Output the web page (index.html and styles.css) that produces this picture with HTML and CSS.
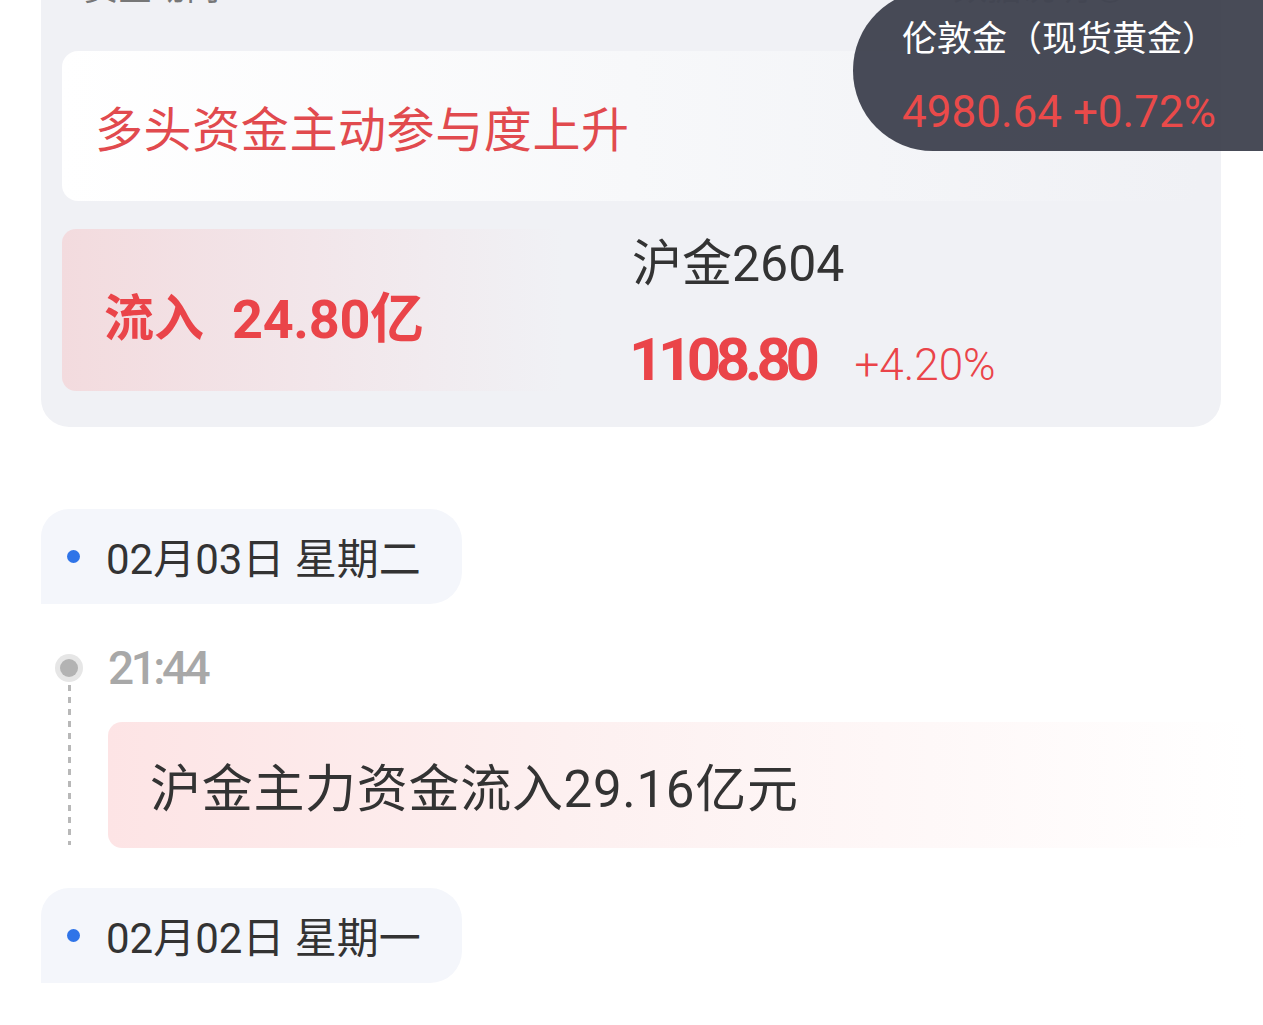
FILE: index.html
```html
<!DOCTYPE html>
<html lang="zh-CN">
<head>
<meta charset="utf-8">
<title>资金动向</title>
<link rel="stylesheet" href="styles.css">
</head>
<body>
<div class="page">
  <section class="summary">
    <div class="summary-head">
      <span class="head-title">资金动向</span>
      <span class="head-help">数据说明 <span class="help-icon">?</span></span>
    </div>
    <div class="signal">多头资金主动参与度上升</div>
    <div class="flow-row">
      <div class="flow-box"><span class="flow-label">流入</span><span class="flow-value">24.80亿</span></div>
      <div class="contract">
        <div class="contract-name">沪金2604</div>
        <div class="contract-price"><span class="price">1108.80</span><span class="change">+4.20%</span></div>
      </div>
    </div>
  </section>

  <div class="date-pill"><span class="blue-dot"></span><span class="date-text">02月03日 星期二</span></div>

  <div class="tl-item">
    <div class="tl-rail">
      <span class="tl-dot"><span class="tl-dot-inner"></span></span>
      <span class="tl-line"></span>
    </div>
    <div class="tl-body">
      <div class="tl-time">21:44</div>
      <div class="tl-card">沪金主力资金流入29.16亿元</div>
    </div>
  </div>

  <div class="date-pill"><span class="blue-dot"></span><span class="date-text">02月02日 星期一</span></div>
</div>

<div class="quote-badge">
  <div class="quote-name">伦敦金（现货黄金）</div>
  <div class="quote-value">4980.64 +0.72%</div>
</div>
</body>
</html>
```

FILE: styles.css
```css
* { box-sizing: border-box; }
html, body { margin: 0; padding: 0; background: #ffffff; }
body {
  font-family: Roboto, "Noto Sans CJK SC", "Noto Sans", sans-serif;
  color: #333333;
  overflow: hidden;
  width: 1263px;
  height: 1025px;
  position: relative;
}
.page {
  padding-left: 41px;
  display: flex;
  flex-direction: column;
  align-items: flex-start;
}
.summary {
  width: 1180px;
  margin-top: -60px;
  background: #f0f1f5;
  border-radius: 0 0 28px 28px;
  padding: 0 21px 36px 21px;
  display: flex;
  flex-direction: column;
}
.summary-head {
  height: 111px;
  display: flex;
  justify-content: space-between;
  align-items: flex-end;
  padding: 0 75px 43px 22px;
  font-size: 34px;
  line-height: 40px;
}
.head-title { color: #777; }
.head-help { color: #c8c8cc; display: flex; align-items: center; gap: 6px; }
.help-icon {
  display: inline-flex; width: 30px; height: 30px; border-radius: 50%;
  border: 2px solid #c8c8cc; font-size: 20px; line-height: 1;
  align-items: center; justify-content: center;
}
.signal {
  height: 150px;
  border-radius: 16px;
  background: linear-gradient(90deg, #ffffff 0%, #f7f8fa 50%, #f0f1f5 100%);
  display: flex;
  align-items: center;
  padding-left: 33px;
  font-size: 48px;
  color: #e14a4e;
  letter-spacing: 0.6px;
}
.flow-row {
  margin-top: 28px;
  display: flex;
  height: 162px;
}
.flow-box {
  width: 500px;
  border-radius: 14px 0 0 14px;
  background: linear-gradient(90deg, #f3dbde 0%, #f2e6ea 50%, rgba(240,241,245,0) 100%);
  display: flex;
  align-items: center;
  padding-left: 42px;
  padding-top: 8px;
  color: #ea4449;
  font-weight: 700;
}
.flow-label { font-size: 50px; margin-right: 28px; }
.flow-value { font-size: 54px; letter-spacing: -0.3px; }
.contract {
  margin-left: 70px;
  display: flex;
  flex-direction: column;
  padding-top: 5px;
}
.contract-name { font-size: 50px; line-height: 60px; color: #333; }
.contract-price {
  margin-top: 31px;
  display: flex;
  align-items: baseline;
  color: #ea4449;
}
.price { font-size: 60px; font-weight: 700; letter-spacing: -5.5px; line-height: 70px; margin-left: -3px; }
.change { font-size: 44px; font-weight: 300; margin-left: 40px; }

.date-pill {
  width: 421px;
  height: 95px;
  background: #f4f6fb;
  border-radius: 28px 32px 32px 0;
  display: flex;
  align-items: center;
  padding-left: 26px;
  padding-bottom: 3px;
}
.summary + .date-pill { margin-top: 82px; }
.blue-dot { width: 13px; height: 13px; border-radius: 50%; background: #2f74e8; flex: none; margin-top: 3px; }
.date-text { margin-left: 26px; font-size: 42px; color: #333; }

.tl-item {
  margin-left: 14px;
  margin-top: 40px;
  display: flex;
  gap: 25px;
  width: 1195px;
}
.tl-rail {
  width: 28px;
  display: flex;
  flex-direction: column;
  align-items: center;
  padding-top: 10px;
}
.tl-dot {
  width: 28px; height: 28px; border-radius: 50%;
  background: #e6e6e6;
  display: flex; align-items: center; justify-content: center;
  flex: none;
}
.tl-dot-inner { width: 18px; height: 18px; border-radius: 50%; background: #b3b3b3; }
.tl-line {
  width: 3px;
  height: 160px;
  margin-top: 3px;
  background: repeating-linear-gradient(180deg, #b8b8b8 0 6px, transparent 6px 12px);
}
.tl-body { flex: 1; display: flex; flex-direction: column; }
.tl-time {
  font-size: 46px;
  line-height: 48px;
  color: #a8a8a8;
  font-weight: 500;
  letter-spacing: -3.5px;
}
.tl-card {
  margin-top: 30px;
  height: 126px;
  border-radius: 14px;
  background: linear-gradient(90deg, #fde4e5 0%, #fdf0f0 40%, #ffffff 100%);
  display: flex;
  align-items: center;
  padding-left: 42px;
  font-size: 51px;
  color: #333;
  letter-spacing: 0.7px;
}
.tl-item + .date-pill { margin-top: 40px; }

.quote-badge {
  position: absolute;
  top: -10px;
  right: 0;
  width: 410px;
  height: 161px;
  border-radius: 80px 0 0 80px;
  background: rgba(52, 55, 69, 0.9);
  padding-left: 49px;
  padding-top: 25px;
}
.quote-name { font-size: 35px; line-height: 50px; color: #ffffff; }
.quote-value { margin-top: 21px; font-size: 44px; line-height: 52px; color: #ea4a4a; }
```
